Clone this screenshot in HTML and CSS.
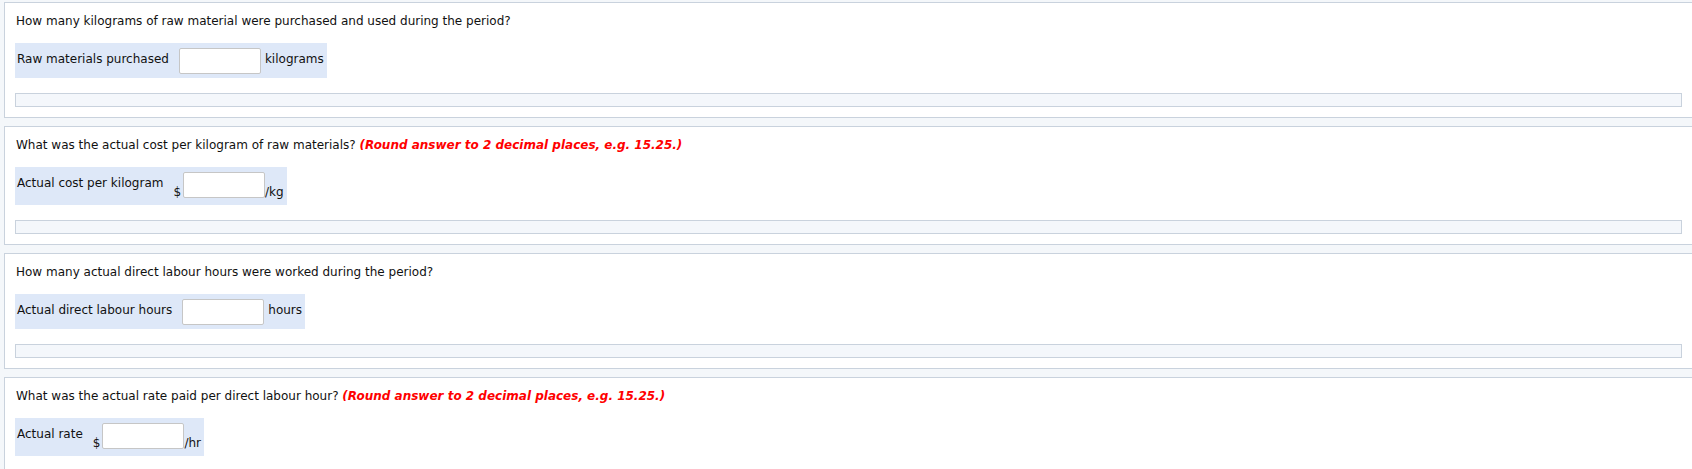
FILE: index.html
```html
<!DOCTYPE html>
<html>
<head>
<meta charset="utf-8">
<link rel="stylesheet" href="styles.css">
</head>
<body>
<div class="page">
  <div class="panel">
    <div class="question">How many kilograms of raw material were purchased and used during the period?</div>
    <div class="answer-row">
      <span class="label">Raw materials purchased</span>
      <input class="field" type="text">
      <span class="unit">kilograms</span>
    </div>
    <div class="bar"></div>
  </div>

  <div class="panel">
    <div class="question">What was the actual cost per kilogram of raw materials? <span class="hint">(Round answer to 2 decimal places, e.g. 15.25.)</span></div>
    <div class="answer-row money-row">
      <span class="label">Actual cost per kilogram</span>
      <span class="money">
        <span class="currency">$</span>
        <input class="field" type="text">
        <span class="per">/kg</span>
      </span>
    </div>
    <div class="bar"></div>
  </div>

  <div class="panel">
    <div class="question">How many actual direct labour hours were worked during the period?</div>
    <div class="answer-row">
      <span class="label">Actual direct labour hours</span>
      <input class="field" type="text">
      <span class="unit">hours</span>
    </div>
    <div class="bar"></div>
  </div>

  <div class="panel">
    <div class="question">What was the actual rate paid per direct labour hour? <span class="hint">(Round answer to 2 decimal places, e.g. 15.25.)</span></div>
    <div class="answer-row money-row">
      <span class="label">Actual rate</span>
      <span class="money">
        <span class="currency">$</span>
        <input class="field" type="text">
        <span class="per">/hr</span>
      </span>
    </div>
    <div class="bar"></div>
  </div>
</div>
</body>
</html>
```

FILE: styles.css
```css
html {
  overflow: hidden;
}
body {
  margin: 0;
  background: #f4f7fa;
  font-family: "DejaVu Sans", Verdana, sans-serif;
  font-size: 12px;
  color: #111;
}
.page {
  display: flex;
  flex-direction: column;
  gap: 8px;
  padding-top: 2px;
  margin-left: 4px;
  margin-right: -1px;
}
.panel {
  background: #fff;
  border: 1px solid #c9d2dd;
  padding: 10px;
}
.question {
  line-height: 16px;
  height: 16px;
  padding-left: 1px;
  margin-bottom: 14px;
  white-space: nowrap;
}
.hint {
  color: #ff0000;
  font-weight: bold;
  font-style: italic;
}
.answer-row {
  display: inline-flex;
  align-items: flex-start;
  background: #dee8f8;
  padding: 5px 3px 4px 2px;
}
.money-row {
  padding-bottom: 6px;
}
.label {
  margin-top: 4px;
  margin-right: 10px;
  line-height: 14px;
}
.field {
  box-sizing: border-box;
  width: 82px;
  height: 26px;
  margin: 0;
  border: 1px solid #c6c6c6;
  border-radius: 2px;
  background: #fff;
  padding: 0 4px;
  font-family: inherit;
  font-size: 12px;
  outline: none;
}
.unit {
  margin-top: 4px;
  margin-left: 4px;
  line-height: 14px;
}
.money {
  display: inline-flex;
  align-items: flex-end;
}
.money .field {
  margin-bottom: 1px;
}
.currency {
  line-height: 14px;
  margin-right: 2px;
}
.per {
  line-height: 14px;
}
.bar {
  margin-top: 15px;
  height: 12px;
  background: #f4f7fb;
  border: 1px solid #c9d2dd;
}
```
